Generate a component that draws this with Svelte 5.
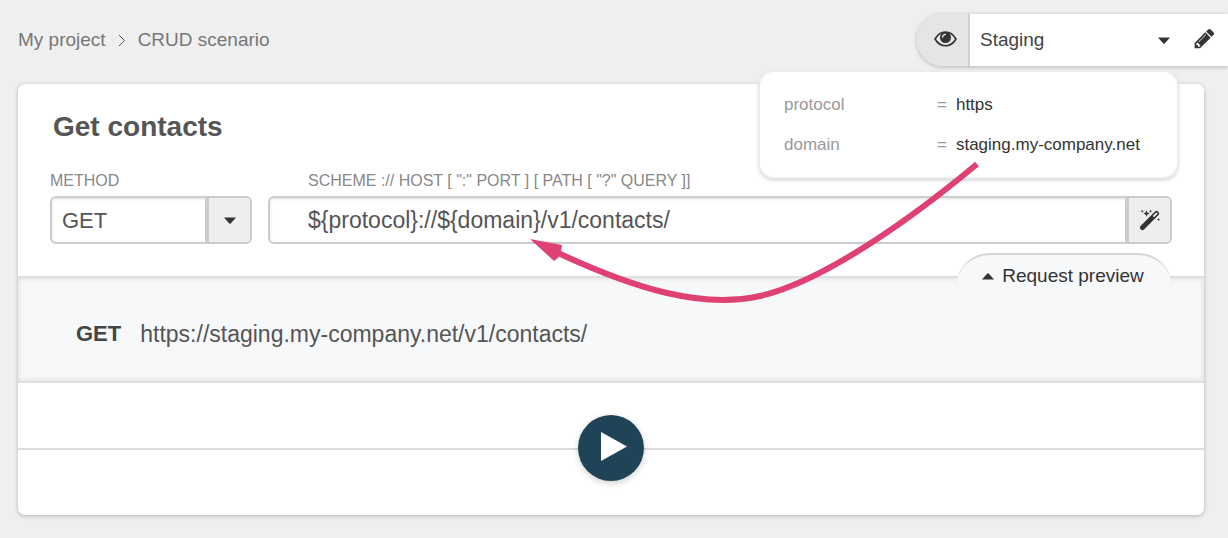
<script>
  let environment = $state('Staging');
  let method = $state('GET');
  let url = $state('${protocol}://${domain}/v1/contacts/');

  const variables = [
    { name: 'protocol', value: 'https' },
    { name: 'domain', value: 'staging.my-company.net' },
  ];

  let resolved = $derived(
    variables.reduce((text, v) => text.replaceAll('${' + v.name + '}', v.value), url)
  );
</script>

<div class="page">
  <header>
    <nav aria-label="Breadcrumb">
      <a href="#project">My project</a>
      <svg class="chevron" viewBox="0 0 8 14" aria-hidden="true"><path d="M1 2L6.500 7.500L1 13" /></svg>
      <a href="#scenario">CRUD scenario</a>
    </nav>

    <div class="env">
      <button class="eye" aria-label="Show variables">
        <svg viewBox="0 0 23 16" aria-hidden="true">
          <path class="lid" d="M1 8Q5 1 11.500 1T22 8Q18 14.800 11.500 14.800T1 8z" />
          <circle cx="11.500" cy="6.500" r="5.500" />
          <path class="glint" d="M8.600 6.300Q8.800 3.600 11.500 3.400" />
        </svg>
      </button>
      <div class="picker">
        <select aria-label="Environment" bind:value={environment}>
          <option>Staging</option>
        </select>
        <svg class="caret" viewBox="0 0 12 7" aria-hidden="true"><path d="M0 0.500h12L6.700 6.500q-.7.700-1.400 0z" /></svg>
      </div>
      <button class="edit" aria-label="Edit environment">
        <svg viewBox="0 0 1792 1792" aria-hidden="true"><path d="M491 1536l91-91-235-235-91 91v107h128v128h107zm523-928q0-22-22-22-10 0-17 7l-542 542q-7 7-7 17 0 22 22 22 10 0 17-7l542-542q7-7 7-17zm-54-192l416 416-832 832h-416v-416zm683 96q0 53-37 90l-166 166-416-416 166-165q36-38 90-38 53 0 91 38l235 234q37 39 37 91z" /></svg>
      </button>

      <dl class="popover">
        {#each variables as v}
          <div>
            <dt>{v.name}</dt>
            <dd>{v.value}</dd>
          </div>
        {/each}
      </dl>
    </div>
  </header>

  <main>
    <section class="request">
      <h1>Get contacts</h1>
      <div class="fields">
        <div class="field method">
          <label for="method">METHOD</label>
          <div class="control">
            <select id="method" bind:value={method}>
              <option>GET</option>
              <option>POST</option>
              <option>PUT</option>
              <option>DELETE</option>
            </select>
            <span class="addon" aria-hidden="true">
              <svg class="caret" viewBox="0 0 12 7"><path d="M0 0.500h12L6.700 6.500q-.7.700-1.400 0z" /></svg>
            </span>
          </div>
        </div>
        <div class="field url">
          <label for="url">SCHEME :// HOST [ ":" PORT ] [ PATH [ "?" QUERY ]]</label>
          <div class="control">
            <input id="url" type="text" bind:value={url} />
            <button class="addon" aria-label="Insert expression">
              <svg class="wand" viewBox="0 0 22 22" aria-hidden="true">
                <path class="stick" d="M3.500 18.500L17.500 4.500" />
                <path class="slot" d="M15 7L17.600 4.400" />
                <path d="M7.500 1.300L8.400 3.600L10.700 4.500L8.400 5.400L7.500 7.700L6.600 5.400L4.300 4.500L6.600 3.600zM3.200 .7L3.700 1.700L4.700 2.200L3.700 2.700L3.200 3.700L2.700 2.700L1.700 2.200L2.700 1.700zM11.500 .7L12 1.700L13 2.200L12 2.700L11.500 3.700L11 2.700L10 2.200L11 1.700zM19.600 9L20.100 10L21.100 10.500L20.100 11L19.600 12L19.100 11L18.100 10.500L19.100 10z" />
              </svg>
            </button>
          </div>
        </div>
      </div>
    </section>

    <section class="preview">
      <button class="tab">
        <svg class="caret" viewBox="0 0 12 7" aria-hidden="true"><path d="M0 6.500h12L6.700 0.500q-.7-.7-1.400 0z" /></svg>
        Request preview
      </button>
      <p><strong>{method}</strong><span>{resolved}</span></p>
    </section>

    <section class="run">
      <button class="play" aria-label="Send request">
        <svg viewBox="0 0 26 29" aria-hidden="true"><path d="M0 0L26 14.500L0 29z" /></svg>
      </button>
    </section>
  </main>

  <svg class="arrow" viewBox="0 0 460 150" aria-hidden="true">
    <path class="line" d="M447 4C380 60 292 122 230 136C172 149 105 129 26 92" />
    <path class="head" d="M0 79L32 85L31 92L28 98L24 101z" />
  </svg>
</div>

<style>
  :global(body) {
    margin: 0;
    background: #efefef;
  }

  .page {
    position: relative;
    min-height: 100vh;
    box-sizing: border-box;
    padding-bottom: 23px;
    background: #efefef;
    color: #555;
    font-family: "Liberation Sans", Arial, sans-serif;
    font-size: 19px;
  }

  button,
  select,
  input {
    margin: 0;
    padding: 0;
    border: 0;
    background: none;
    color: inherit;
    font: inherit;
    appearance: none;
    border-radius: 0;
  }

  svg {
    display: block;
    fill: #333;
  }

  header {
    display: flex;
    justify-content: space-between;
    align-items: flex-start;
    padding: 14px 0 18px 18px;
  }

  nav {
    display: flex;
    align-items: center;
    gap: 12px;
    height: 52px;
  }

  nav a {
    color: #777;
    text-decoration: none;
  }

  .chevron {
    width: 8px;
    height: 14px;
    fill: none;
    stroke: #555;
  }

  .env {
    position: relative;
    display: flex;
    width: 311px;
    height: 52px;
    border-radius: 26px 0 0 26px;
    background: #fff;
    box-shadow: 0 1px 4px rgba(0, 0, 0, 0.25);
  }

  .eye {
    display: flex;
    align-items: center;
    justify-content: center;
    box-sizing: border-box;
    width: 53px;
    padding: 0 0 2px 6px;
    border-right: 2px solid #d0d0d0;
    border-radius: 26px 0 0 26px;
    background: #e5e5e5;
  }

  .eye svg {
    width: 23px;
    height: 16px;
  }

  .lid {
    fill: none;
    stroke: #333;
    stroke-width: 1.6;
  }

  .glint {
    fill: none;
    stroke: #e5e5e5;
    stroke-width: 1.2;
    stroke-linecap: round;
  }

  .picker {
    display: flex;
    flex: 1;
    align-items: center;
    padding-right: 12px;
  }

  .picker select {
    flex: 1;
    align-self: stretch;
    padding: 0 0 2px 10px;
    color: #444;
  }

  .caret {
    width: 12px;
    height: 7px;
  }

  .edit {
    display: flex;
    align-items: center;
    justify-content: center;
    box-sizing: border-box;
    width: 46px;
    padding: 0 2px 4px 0;
  }

  .edit svg {
    width: 23px;
    height: 23px;
  }

  .popover {
    position: absolute;
    z-index: 1;
    top: 58px;
    right: 51px;
    box-sizing: border-box;
    width: 417px;
    margin: 0;
    padding: 13px 24px 12px;
    border-radius: 14px;
    background: #fff;
    box-shadow: 0 0 0 2px #ececec, 0 2px 5px rgba(0, 0, 0, 0.3);
    font-size: 17px;
  }

  .popover div {
    display: flex;
    align-items: center;
    height: 40px;
  }

  dt {
    width: 153px;
    color: #999;
  }

  dd {
    margin: 0;
    color: #333;
  }

  dd::before {
    content: "=";
    margin-right: 9px;
    color: #999;
  }

  main {
    margin: 0 24px 0 18px;
    border-radius: 7px;
    background: #fff;
    box-shadow: 0 1px 4px rgba(0, 0, 0, 0.25);
  }

  .request {
    padding: 25px 32px 32px;
  }

  h1 {
    margin: 0 0 28px 3px;
    font-size: 28px;
    line-height: 36px;
  }

  .fields {
    display: flex;
    gap: 16px;
  }

  .field {
    display: flex;
    flex-direction: column;
    gap: 7px;
  }

  .method {
    width: 202px;
  }

  .url {
    flex: 1;
  }

  label {
    color: #888;
    font-size: 16px;
    line-height: 16px;
  }

  .url label {
    padding-left: 40px;
  }

  .control {
    position: relative;
    display: flex;
    box-sizing: border-box;
    height: 48px;
    border: 2px solid #ccc;
    border-radius: 6px;
    box-shadow: inset 0 1px 3px rgba(0, 0, 0, 0.12);
    font-size: 22px;
  }

  .control select,
  .control input {
    flex: 1;
    min-width: 0;
    padding-left: 10px;
  }

  .control input {
    padding-left: 38px;
    font-size: 23px;
  }

  .addon {
    display: flex;
    align-items: center;
    justify-content: center;
    box-sizing: border-box;
    width: 45px;
    border-left: 4px solid #ccc;
    border-radius: 0 4px 4px 0;
    background: #eee;
  }

  .wand {
    width: 22px;
    height: 22px;
  }

  .stick {
    stroke: #333;
    stroke-width: 5;
    stroke-linecap: round;
  }

  .slot {
    stroke: #eee;
    stroke-width: 1.8;
    stroke-linecap: round;
  }

  .preview {
    position: relative;
    padding: 39px 58px 30px;
    border-top: 2px solid #dcdedf;
    border-bottom: 2px solid #dcdedf;
    background: #f7f8fa;
    box-shadow: inset 0 0 6px rgba(0, 0, 0, 0.12);
  }

  .tab {
    position: absolute;
    top: -25px;
    right: 32px;
    display: flex;
    align-items: center;
    justify-content: center;
    gap: 8px;
    box-sizing: border-box;
    width: 216px;
    height: 46px;
    padding: 0 2px 2px 0;
    border-top: 2px solid #d4d4d4;
    border-radius: 34px 34px 0 0;
    background: #f7f8fa;
    color: #333;
  }

  .preview p {
    display: flex;
    gap: 19px;
    margin: 0;
    font-size: 23px;
    line-height: 34px;
  }

  strong {
    color: #444;
    font-size: 22px;
  }

  .run {
    display: flex;
    justify-content: center;
    padding: 32px 0 34px;
    background: linear-gradient(#dcdcdc, #dcdcdc) 0 50% / 100% 2px no-repeat;
  }

  .play {
    display: flex;
    align-items: center;
    justify-content: center;
    box-sizing: border-box;
    width: 66px;
    height: 66px;
    padding: 0 0 4px 6px;
    border-radius: 50%;
    background: #204457;
    box-shadow: 0 2px 6px rgba(0, 0, 0, 0.2);
  }

  .play svg {
    width: 26px;
    height: 29px;
    fill: #fff;
  }

  .arrow {
    position: absolute;
    z-index: 2;
    top: 160px;
    left: 530px;
    width: 460px;
    height: 150px;
    pointer-events: none;
  }

  .line {
    fill: none;
    stroke: #e04173;
    stroke-width: 6;
  }

  .head {
    fill: #e04173;
  }
</style>
